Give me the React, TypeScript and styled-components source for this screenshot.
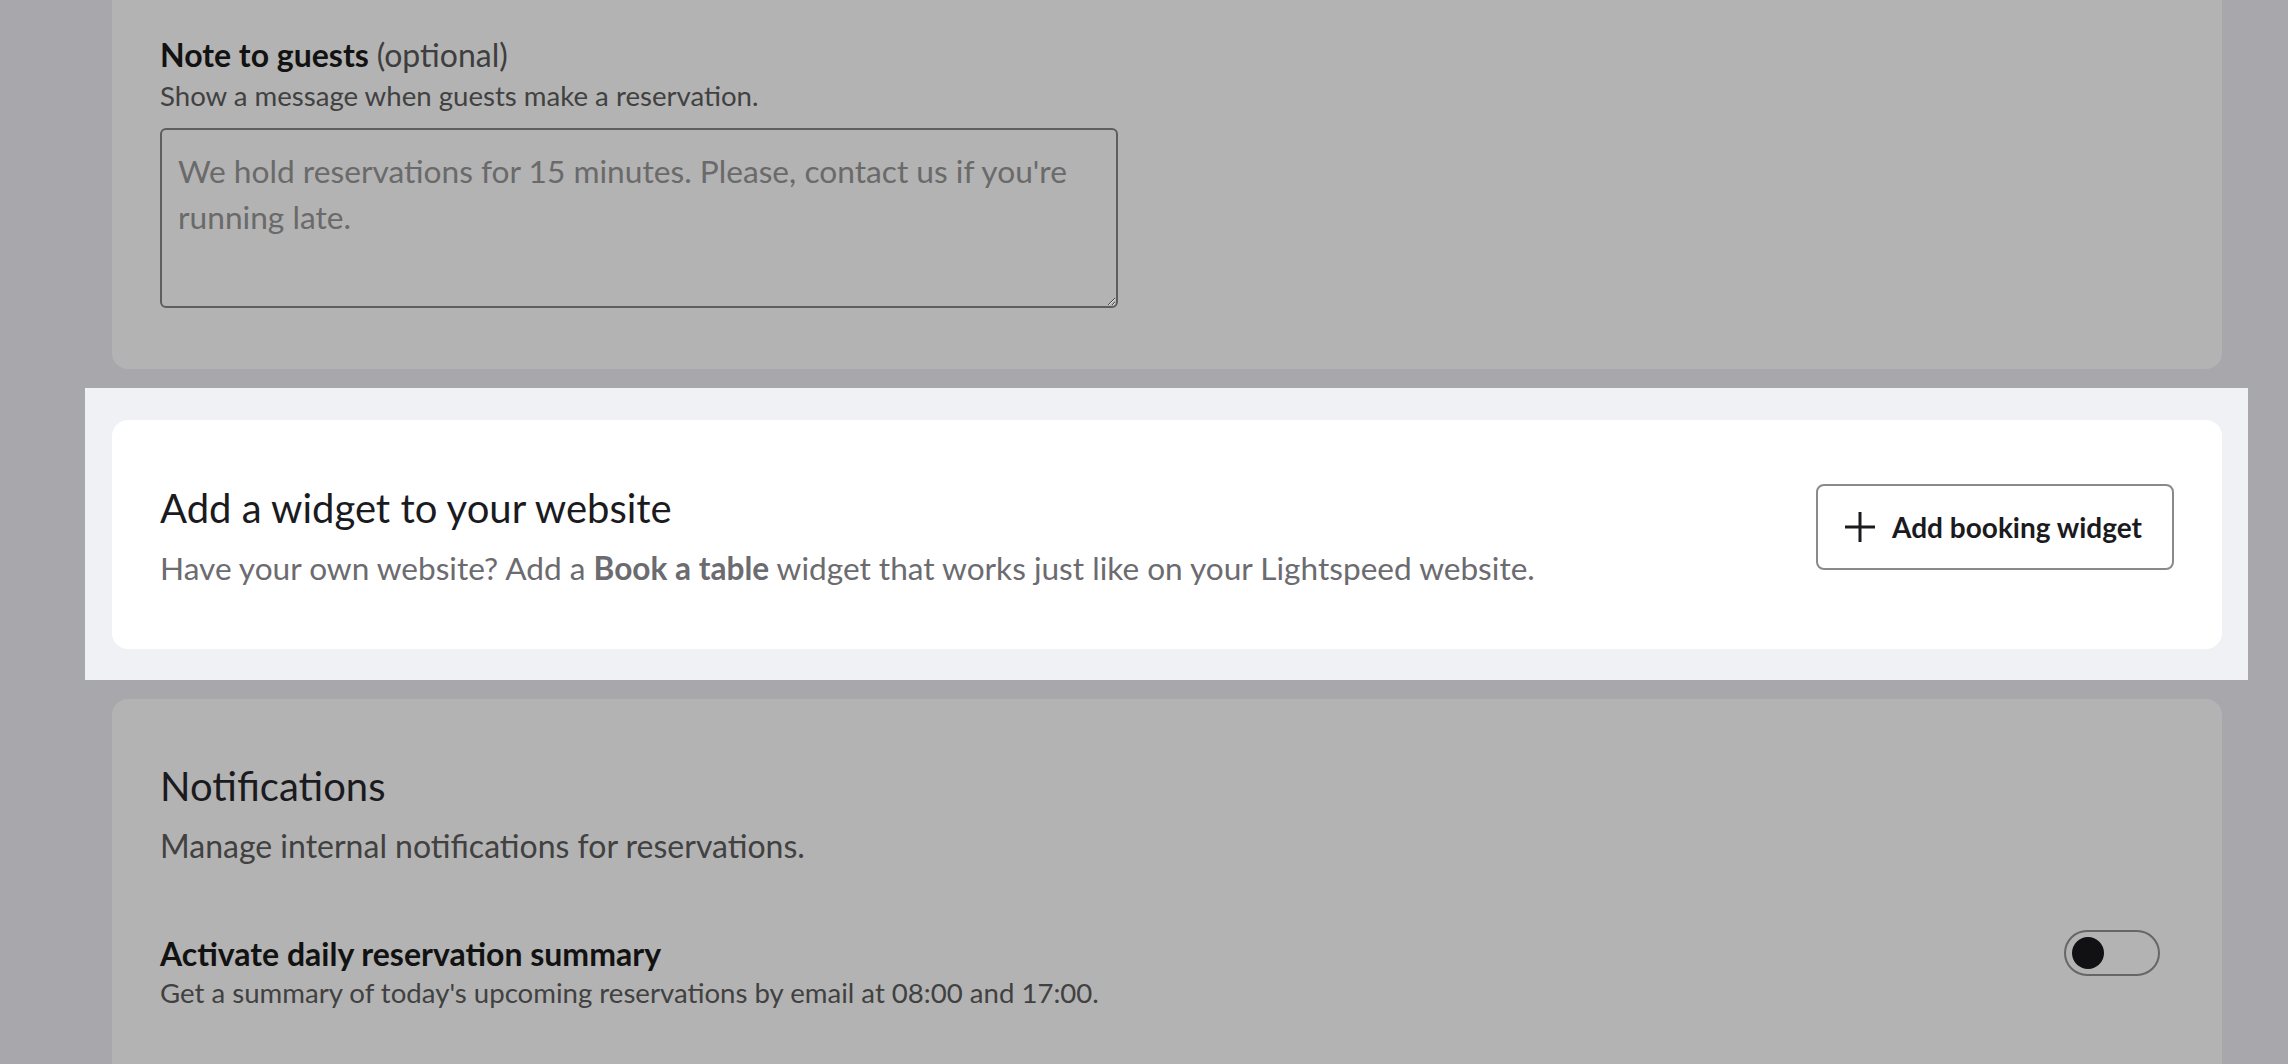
import styled, { createGlobalStyle } from 'styled-components';

const GlobalStyle = createGlobalStyle`
    html, body {
        margin: 0;
        background: #a8a8ac;
        overflow: hidden;
        font-family: Lato, "Open Sans", sans-serif;
    }
`;

const Page = styled.div`
    display: flex;
    flex-direction: column;
    padding: 0 66px 0 112px;
    height: 1064px;
    box-sizing: border-box;
`;

const Card = styled.section<{ $dimmed?: boolean }>`
    background: ${(p) => (p.$dimmed ? '#b3b3b3' : '#ffffff')};
    border-radius: 16px;
    padding: 0 48px;
    box-sizing: border-box;
`;

const TopCard = styled(Card)`
    border-radius: 0 0 16px 16px;
    padding-top: 34px;
    padding-bottom: 61px;
`;

const Spotlight = styled.div`
    margin: 19px -26px 19px -27px;
    padding: 32px 26px 31px 27px;
    background: #f0f1f5;
`;

const WidgetCard = styled(Card)`
    display: flex;
    align-items: flex-start;
    justify-content: space-between;
    padding-top: 62px;
    padding-bottom: 57px;
`;

const BottomCard = styled(Card)`
    flex: 1;
    border-radius: 16px 16px 0 0;
    padding-top: 61px;
`;

const Label = styled.div`
    font-size: 32px;
    line-height: 42px;
    font-weight: 700;
    color: #121212;
`;

const Optional = styled.span`
    font-weight: 400;
    color: #3e3e3e;
`;

const Hint = styled.div<{ $tight?: boolean }>`
    font-size: 27.6px;
    line-height: ${(p) => (p.$tight ? '36px' : '40px')};
    color: #414141;
`;

const NoteField = styled.textarea`
    display: block;
    margin-top: 12px;
    width: 958px;
    height: 180px;
    box-sizing: border-box;
    padding: 18px 16px;
    border: 2px solid #5e5e5e;
    border-radius: 6px;
    background: transparent;
    font-family: Lato, "Open Sans", sans-serif;
    font-size: 31.7px;
    line-height: 46px;
    color: #222;
    resize: vertical;

    &::placeholder {
        color: #6a6a6a;
    }
`;

const Heading = styled.h2`
    margin: 0;
    font-size: 40px;
    line-height: 52px;
    font-weight: 400;
    color: #1b1b1f;
`;

const Lead = styled.p<{ $dimmed?: boolean }>`
    margin: 10px 0 0;
    font-size: ${(p) => (p.$dimmed ? '32px' : '31.6px')};
    line-height: 48px;
    color: ${(p) => (p.$dimmed ? '#414141' : '#6b6b70')};

    b {
        font-weight: 700;
    }
`;

const OutlineButton = styled.button`
    display: flex;
    align-items: center;
    gap: 17px;
    flex-shrink: 0;
    height: 86px;
    margin-top: 2px;
    padding: 0 30px 0 27px;
    border: 2px solid #8a8a8e;
    border-radius: 8px;
    background: #fff;
    font-family: Lato, "Open Sans", sans-serif;
    font-size: 28px;
    font-weight: 700;
    color: #1b1b1f;
    cursor: pointer;
`;

const SettingRow = styled.div`
    display: flex;
    align-items: flex-start;
    justify-content: space-between;
    margin-top: 63px;
    padding-right: 14px;
`;

const Toggle = styled.div`
    width: 96px;
    height: 46px;
    margin-top: -3px;
    box-sizing: border-box;
    border: 2px solid #666;
    border-radius: 23px;
    display: flex;
    align-items: center;
    padding-left: 6px;
`;

const Knob = styled.span`
    width: 32px;
    height: 32px;
    border-radius: 50%;
    background: #111113;
`;

function PlusIcon() {
    return (
        <svg width="30" height="30" viewBox="0 0 30 30" fill="none">
            <path d="M15 0v30M0 15h30" stroke="#1b1b1f" strokeWidth="3"/>
        </svg>
    );
}

export default function App() {
    return (
        <>
            <GlobalStyle/>
            <Page>
                <TopCard $dimmed>
                    <Label>
                        Note to guests <Optional>(optional)</Optional>
                    </Label>
                    <Hint>Show a message when guests make a reservation.</Hint>
                    <NoteField placeholder="We hold reservations for 15 minutes. Please, contact us if you're running late."/>
                </TopCard>

                <Spotlight>
                    <WidgetCard>
                        <div>
                            <Heading>Add a widget to your website</Heading>
                            <Lead>
                                Have your own website? Add a <b>Book a table</b> widget that works just like on your Lightspeed website.
                            </Lead>
                        </div>
                        <OutlineButton>
                            <PlusIcon/>
                            Add booking widget
                        </OutlineButton>
                    </WidgetCard>
                </Spotlight>

                <BottomCard $dimmed>
                    <Heading>Notifications</Heading>
                    <Lead $dimmed>Manage internal notifications for reservations.</Lead>
                    <SettingRow>
                        <div>
                            <Label>Activate daily reservation summary</Label>
                            <Hint $tight>Get a summary of today's upcoming reservations by email at 08:00 and 17:00.</Hint>
                        </div>
                        <Toggle>
                            <Knob/>
                        </Toggle>
                    </SettingRow>
                </BottomCard>
            </Page>
        </>
    );
}
